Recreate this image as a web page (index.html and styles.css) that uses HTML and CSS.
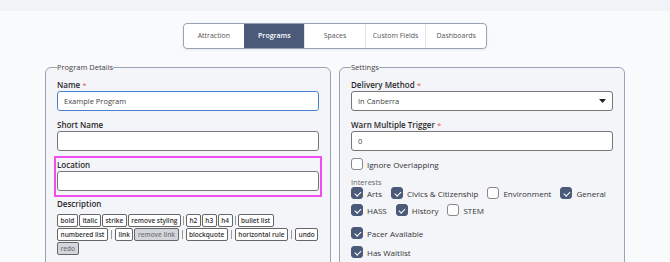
FILE: index.html
```html
<!DOCTYPE html>
<html lang="en">
<head>
    <meta charset="UTF-8">
    <meta name="viewport" content="width=device-width, initial-scale=1.0">
    <title>Program Editor</title>
    <link rel="stylesheet" href="styles.css">
</head>
<body>
    <div class="topbar"></div>

    <div class="tabs">
        <div class="tab">Attraction</div>
        <div class="tab active">Programs</div>
        <div class="tab">Spaces</div>
        <div class="tab">Custom Fields</div>
        <div class="tab">Dashboards</div>
    </div>

    <div class="columns">
        <fieldset class="panel">
            <legend>Program Details</legend>
            <div class="field">
                <label>Name <span class="req">*</span></label>
                <input type="text" class="focused" value="Example Program">
            </div>
            <div class="field">
                <label>Short Name</label>
                <input type="text">
            </div>
            <div class="field highlight">
                <label>Location</label>
                <input type="text">
            </div>
            <div class="field">
                <label class="desc">Description</label>
                <div class="toolbar">
                    <span class="tb">bold</span><span class="tb">italic</span><span class="tb">strike</span><span class="tb">remove styling</span>
                    <span class="sep"></span>
                    <span class="tb">h2</span><span class="tb">h3</span><span class="tb">h4</span>
                    <span class="sep"></span>
                    <span class="tb">bullet list</span>
                    <span class="tb">numbered list</span>
                    <span class="sep wide"></span>
                    <span class="tb">link</span><span class="tb off">remove link</span>
                    <span class="sep wide"></span>
                    <span class="tb">blockquote</span>
                    <span class="sep wide"></span>
                    <span class="tb">horizontal rule</span>
                    <span class="sep wide"></span>
                    <span class="tb">undo</span>
                    <span class="tb off">redo</span>
                </div>
            </div>
        </fieldset>

        <fieldset class="panel">
            <legend>Settings</legend>
            <div class="field">
                <label>Delivery Method <span class="req">*</span></label>
                <div class="select">
                    <span>In Canberra</span>
                    <svg width="7" height="4" viewBox="0 0 7 4"><path d="M0 0h7L3.5 4z" fill="#222"/></svg>
                </div>
            </div>
            <div class="field">
                <label>Warn Multiple Trigger <span class="req">*</span></label>
                <input type="text" value="0">
            </div>
            <div class="check single first">
                <span class="box"></span>Ignore Overlapping
            </div>
            <div class="group-label">Interests</div>
            <div class="checks">
                <div class="check"><span class="box on"></span>Arts</div>
                <div class="check"><span class="box on"></span>Civics &amp; Citizenship</div>
                <div class="check"><span class="box"></span>Environment</div>
                <div class="check"><span class="box on"></span>General</div>
                <div class="check"><span class="box on"></span>HASS</div>
                <div class="check"><span class="box on"></span>History</div>
                <div class="check"><span class="box"></span>STEM</div>
            </div>
            <div class="check single">
                <span class="box on"></span>Pacer Available
            </div>
            <div class="check single">
                <span class="box on"></span>Has Waitlist
            </div>
        </fieldset>
    </div>
</body>
</html>
```

FILE: styles.css
```css
body {
    margin: 0;
    background: #f9fafc;
    font-family: "Open Sans", "Noto Sans", sans-serif;
    color: #333;
    height: 262px;
    overflow: hidden;
}
.topbar {
    height: 11px;
    background: #f2f3f6;
}
.tabs {
    display: flex;
    width: 302px;
    margin: 12px auto 0;
    border: 1px solid #9aa3b5;
    border-radius: 4px;
    background: #fff;
    overflow: hidden;
    box-shadow: 0 1px 3px rgba(0, 0, 0, 0.08);
}
.tab {
    flex: 1;
    height: 24px;
    line-height: 24px;
    text-align: center;
    font-size: 7px;
    color: #555;
    border-left: 1px solid #e2e4ea;
}
.tab:first-child {
    border-left: none;
}
.tab.active {
    background: #4a5a78;
    color: #fff;
    font-weight: 600;
    border-left-color: #4a5a78;
}
.columns {
    display: flex;
    gap: 8px;
    width: 580px;
    margin: 13px auto 0;
}
.panel {
    flex: 1;
    margin: 0;
    padding: 7px 11px 10px;
    border: 1px solid #9aa3b5;
    border-radius: 6px;
    background: #f4f5f9;
    min-width: 0;
}
.panel legend {
    padding: 0;
    font-size: 7.5px;
    color: #444;
}
.field {
    margin-bottom: 8px;
}
.field label {
    display: block;
    font-size: 8px;
    font-weight: 600;
    color: #2a2a2a;
    line-height: 12px;
}
.field label.desc {
    margin-bottom: 4px;
}
.req {
    color: #e05a5a;
    font-weight: 400;
}
.field input, .select {
    display: block;
    box-sizing: border-box;
    width: 100%;
    height: 20px;
    margin: 0;
    padding: 0 6px;
    border: 1px solid #777;
    border-radius: 3px;
    background: #fff;
    font-family: inherit;
    font-size: 7.5px;
    color: #444;
    outline: none;
}
.field input.focused {
    border: 1.5px solid #4a7fd0;
}
.select {
    display: flex;
    align-items: center;
    justify-content: space-between;
}
.highlight {
    margin: -3px -3px 1px;
    padding: 1px 1px 4px;
    border: 2px solid #f04df0;
}
.toolbar {
    display: flex;
    flex-wrap: wrap;
    align-items: center;
    gap: 1px;
    font-size: 6.5px;
}
.tb {
    height: 13px;
    line-height: 11px;
    box-sizing: border-box;
    padding: 0 2.5px;
    border: 1px solid #666;
    border-radius: 2px;
    background: #fff;
    color: #333;
    font-weight: 600;
}
.tb.off {
    background: #d3d6dc;
    color: #777;
}
.sep {
    width: 1px;
    height: 9px;
    margin: 0 1px;
    background: #999;
}
.sep.wide {
    margin: 0 2px;
}
.check {
    display: flex;
    align-items: center;
    gap: 4px;
    height: 12px;
    font-size: 8px;
    color: #333;
}
.check.single {
    margin-bottom: 7px;
}
.check.first {
    margin-top: -1px;
}
.box {
    box-sizing: border-box;
    width: 12px;
    height: 12px;
    border: 1px solid #888;
    border-radius: 3px;
    background: #fff;
    position: relative;
}
.box.on {
    background: #4a5a78;
    border-color: #4a5a78;
}
.box.on::after {
    content: "";
    position: absolute;
    left: 3.5px;
    top: 1.5px;
    width: 2.5px;
    height: 5px;
    border: solid #fff;
    border-width: 0 1.5px 1.5px 0;
    transform: rotate(45deg);
}
.group-label {
    font-size: 7.5px;
    line-height: 10px;
    color: #666;
    margin-top: 2px;
}
.checks {
    display: flex;
    flex-wrap: wrap;
    gap: 5px 9px;
    margin-bottom: 11px;
}
```
